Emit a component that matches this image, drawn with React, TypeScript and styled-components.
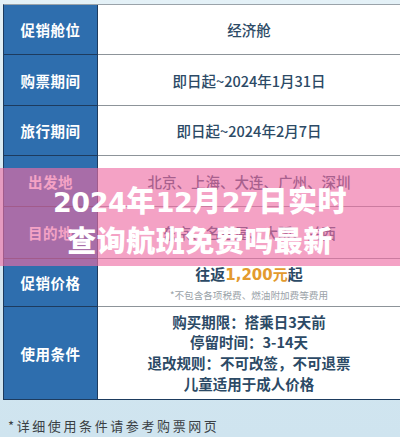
import React from "react";
import styled, { createGlobalStyle } from "styled-components";

const Global = createGlobalStyle`
  html, body { margin: 0; padding: 0; }
  body { background: #d6e9f2; font-family: "Noto Sans CJK SC", "Noto Sans", sans-serif; }
`;

const Page = styled.div`
  position: relative;
  width: 400px;
  height: 437px;
  overflow: hidden;
  background: linear-gradient(180deg, #e4f1f7 0%, #d3e7f1 60%, #cfe4ef 100%);
  display: flex;
  flex-direction: column;
  padding-top: 4px;
  box-sizing: border-box;
`;

const Table = styled.div`
  margin-left: 3px;
  display: grid;
  grid-template-columns: 94px 1fr;
  border-top: 1px solid #9aa3aa;
  border-left: 1px solid #1d3b5e;
  border-bottom: 1px solid #1d3b5e;
  background: #fff;
`;

const Label = styled.div<{ $h: number; $first?: boolean }>`
  height: ${(p) => p.$h}px;
  background: #2e6eae;
  color: #fff;
  font-weight: 700;
  font-size: 14.5px;
  letter-spacing: 0.5px;
  display: flex;
  align-items: center;
  justify-content: center;
  border-right: 1px solid #1d3b5e;
  border-top: ${(p) => (p.$first ? "none" : "1px solid #1d3b5e")};
  box-sizing: border-box;
`;

const Cell = styled.div<{ $h: number; $first?: boolean }>`
  height: ${(p) => p.$h}px;
  display: flex;
  flex-direction: column;
  align-items: center;
  justify-content: center;
  color: #2c4a66;
  font-size: 14.5px;
  font-weight: 500;
  border-top: ${(p) => (p.$first ? "none" : "1px solid #8d9499")};
  box-sizing: border-box;
`;

const Price = styled.div`
  font-size: 15px;
  font-weight: 600;
  color: #2c4a66;
  line-height: 20px;
`;

const Orange = styled.span`
  color: #e39a2e;
  font-family: "DejaVu Sans", "Noto Sans CJK SC", sans-serif;
  font-weight: 700;
  font-size: 15px;
`;

const Note = styled.div`
  font-size: 9.6px;
  color: #9aa2a8;
  margin-top: 3px;
  font-weight: 400;
`;

const CondLine = styled.div`
  font-size: 14.5px;
  font-weight: 700;
  line-height: 20.7px;
  color: #2c4a66;
`;

const Footer = styled.div`
  margin-top: 16px;
  margin-left: 8px;
  font-size: 13px;
  letter-spacing: 2.6px;
  color: #3a3f44;
`;

const Banner = styled.div`
  position: absolute;
  left: 0;
  right: 0;
  top: 168px;
  height: 98px;
  padding-top: 4px;
  box-sizing: border-box;
  background: rgba(238, 110, 165, 0.64);
  display: flex;
  flex-direction: column;
  align-items: center;
  justify-content: center;
`;

const Title = styled.div`
  color: #fff;
  font-family: "Noto Sans CJK SC", sans-serif;
  font-weight: 900;
  font-size: 29px;
  line-height: 37px;
  letter-spacing: 0.5px;
  text-align: center;
  white-space: nowrap;
`;

const Num = styled.span`
  font-family: "DejaVu Sans", sans-serif;
  font-weight: 700;
  font-size: 27px;
  letter-spacing: -0.5px;
`;

const rows: { label: string; h: number; content: React.ReactNode }[] = [
  { label: "促销舱位", h: 49, content: "经济舱" },
  { label: "购票期间", h: 51, content: "即日起~2024年1月31日" },
  { label: "旅行期间", h: 50, content: "即日起~2024年2月7日" },
  { label: "出发地", h: 51, content: "北京、上海、大连、广州、深圳" },
  { label: "目的地", h: 52, content: "东京、名古屋、大阪、关西" },
  {
    label: "促销价格",
    h: 48,
    content: (
      <>
        <Price>
          往返<Orange>1,200元</Orange>起
        </Price>
        <Note>*不包含各项税费、燃油附加费等费用</Note>
      </>
    ),
  },
  {
    label: "使用条件",
    h: 93,
    content: (
      <>
        <CondLine>购买期限：搭乘日3天前</CondLine>
        <CondLine>停留时间：3-14天</CondLine>
        <CondLine>退改规则：不可改签，不可退票</CondLine>
        <CondLine>儿童适用于成人价格</CondLine>
      </>
    ),
  },
];

export default function App() {
  return (
    <>
      <Global />
      <Page>
        <Table>
          {rows.map((r, i) => (
            <React.Fragment key={r.label}>
              <Label $h={r.h} $first={i === 0}>
                {r.label}
              </Label>
              <Cell $h={r.h} $first={i === 0}>
                {r.content}
              </Cell>
            </React.Fragment>
          ))}
        </Table>
        <Footer>*详细使用条件请参考购票网页</Footer>
        <Banner>
          <Title>
            <Num>2024</Num>年<Num>12</Num>月<Num>27</Num>日实时
          </Title>
          <Title>查询航班免费吗最新</Title>
        </Banner>
      </Page>
    </>
  );
}
